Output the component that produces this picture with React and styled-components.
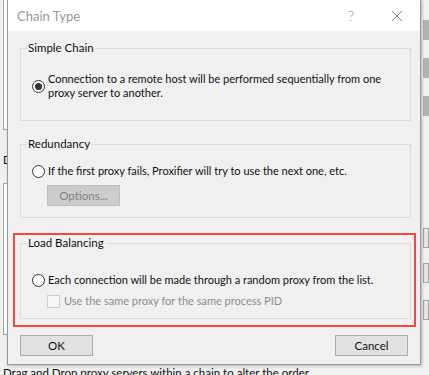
import React from 'react';
import styled, { createGlobalStyle } from 'styled-components';

const GlobalStyle = createGlobalStyle`
  html, body {
    margin: 0;
    padding: 0;
    background: #f0f0f0;
  }
  body {
    font-family: Lato, "Liberation Sans", sans-serif;
    font-size: 11px;
    color: #111;
  }
`;

const Screen = styled.div`
  position: relative;
  width: 429px;
  height: 375px;
  overflow: hidden;
  background: #f0f0f0;
`;

const Backdrop = styled.div`
  display: flex;
  flex-direction: column;
  height: 100%;
  padding-left: 3px;
  box-sizing: border-box;
`;

const BackPanel = styled.div`
  flex: none;
  width: 40px;
  height: ${(p) => p.h}px;
  margin-top: ${(p) => p.mt || 0}px;
  border: 1px solid #a0a0a0;
  background: #fff;
`;

const BackText = styled.div`
  flex: none;
  margin-top: ${(p) => p.mt || 0}px;
  line-height: 14px;
  font-size: 11.5px;
  white-space: nowrap;
`;

const ScrollStrip = styled.div`
  position: absolute;
  top: 0;
  right: 0;
  width: 6px;
  height: 100%;
  display: flex;
  flex-direction: column;
  align-items: flex-end;
`;

const ScrollPiece = styled.div`
  width: 6px;
  height: 20px;
  margin-top: ${(p) => p.mt}px;
  background: ${(p) => (p.light ? '#e6e6e6' : '#b4b4b4')};
  border: ${(p) => (p.light ? '1px solid #a8a8a8' : 'none')};
  box-sizing: border-box;
`;

const Dialog = styled.div`
  position: absolute;
  left: 7px;
  top: -1px;
  width: 414px;
  height: 366px;
  box-sizing: border-box;
  border: 1px solid #9a9a9a;
  background: #f0f0f0;
  box-shadow: 1px 1px 3px rgba(0, 0, 0, 0.25);
  display: flex;
  flex-direction: column;
  overflow: hidden;
`;

const TitleBar = styled.div`
  height: 31px;
  flex: none;
  background: #fff;
  display: flex;
  align-items: center;
  padding-left: 9px;
`;

const Title = styled.span`
  flex: 1;
  font-size: 13px;
  color: #999;
`;

const TitleButton = styled.span`
  width: 46px;
  display: flex;
  justify-content: center;
  align-items: center;
  color: #8a8a8a;
  font-size: 14px;
  font-weight: 300;
`;

const Body = styled.div`
  display: flex;
  flex-direction: column;
  padding: 9px 9px 0 12px;
`;

const Group = styled.fieldset`
  margin: ${(p) => p.mt || 0}px 0 0 0;
  border: 1px solid #dcdcdc;
  padding: ${(p) => p.pt}px 8px ${(p) => p.pb}px 11px;
  min-width: 0;
`;

const Legend = styled.legend`
  margin-left: -5px;
  padding: 0 2px 0 1px;
  line-height: 16px;
  font-size: 11.5px;
  color: #111;
`;

const Highlight = styled.div`
  margin: 15px -5px 0 -7px;
  border: 2px solid #f0484a;
  padding: 0 3px 6px 5px;
`;

const Option = styled.label`
  display: flex;
  align-items: center;
  gap: 3px;
  line-height: 14px;
  white-space: nowrap;
  color: #111;
`;

const Radio = styled.span`
  flex: none;
  width: 13px;
  height: 13px;
  box-sizing: border-box;
  border-radius: 50%;
  border: 1px solid #333;
  background: #fff;
  display: flex;
  align-items: center;
  justify-content: center;
  &::after {
    content: '';
    display: ${(p) => (p.checked ? 'block' : 'none')};
    width: 7px;
    height: 7px;
    border-radius: 50%;
    background: #333;
  }
`;

const Checkbox = styled.span`
  flex: none;
  width: 13px;
  height: 13px;
  box-sizing: border-box;
  border: 1px solid #cccccc;
  background: #f7f7f7;
`;

const SubRow = styled.div`
  display: flex;
  align-items: center;
  gap: 4px;
  margin: ${(p) => p.mt}px 0 0 15px;
  color: #8d8d8d;
  line-height: 14px;
  white-space: nowrap;
`;

const Button = styled.button`
  font-family: inherit;
  font-size: 11.5px;
  width: 73px;
  height: 21px;
  padding: 0;
  box-sizing: border-box;
  border: 1px solid ${(p) => (p.disabled ? '#bfbfbf' : '#adadad')};
  background: ${(p) => (p.disabled ? '#cccccc' : '#e1e1e1')};
  color: ${(p) => (p.disabled ? '#838383' : '#111')};
`;

const OptionsButton = styled(Button)`
  margin: 7px 0 0 15px;
`;

const Footer = styled.div`
  display: flex;
  justify-content: space-between;
  margin: 8px 3px 0 0;
`;

export default function App() {
  return (
    <Screen>
      <GlobalStyle />
      <Backdrop>
        <BackPanel h={130} mt={-2} />
        <BackText mt={23}>D</BackText>
        <BackPanel h={150} mt={16} />
        <BackText mt={31}>Drag and Drop proxy servers within a chain to alter the order.</BackText>
      </Backdrop>
      <ScrollStrip>
        <ScrollPiece mt={20} />
        <ScrollPiece mt={18} />
        <ScrollPiece mt={18} />
        <ScrollPiece mt={112} light />
        <ScrollPiece mt={15} light />
        <ScrollPiece mt={17} light />
      </ScrollStrip>
      <Dialog>
        <TitleBar>
          <Title>Chain Type</Title>
          <TitleButton>?</TitleButton>
          <TitleButton>
            <svg width="12" height="12" viewBox="0 0 12 12">
              <path d="M1 1 L11 11 M11 1 L1 11" stroke="#8a8a8a" strokeWidth="1" />
            </svg>
          </TitleButton>
        </TitleBar>
        <Body>
          <Group pt={16} pb={20}>
            <Legend>Simple Chain</Legend>
            <Option>
              <Radio checked />
              <span>
                Connection to a remote host will be performed sequentially from one
                <br />
                proxy server to another.
              </span>
            </Option>
          </Group>
          <Group mt={15} pt={12} pb={11}>
            <Legend>Redundancy</Legend>
            <Option>
              <Radio />
              <span>If the first proxy fails, Proxifier will try to use the next one, etc.</span>
            </Option>
            <OptionsButton disabled>Options...</OptionsButton>
          </Group>
          <Highlight>
            <Group pt={22} pb={10}>
              <Legend>Load Balancing</Legend>
              <Option>
                <Radio />
                <span>Each connection will be made through a random proxy from the list.</span>
              </Option>
              <SubRow mt={7}>
                <Checkbox />
                <span>Use the same proxy for the same process PID</span>
              </SubRow>
            </Group>
          </Highlight>
          <Footer>
            <Button>OK</Button>
            <Button>Cancel</Button>
          </Footer>
        </Body>
      </Dialog>
    </Screen>
  );
}
